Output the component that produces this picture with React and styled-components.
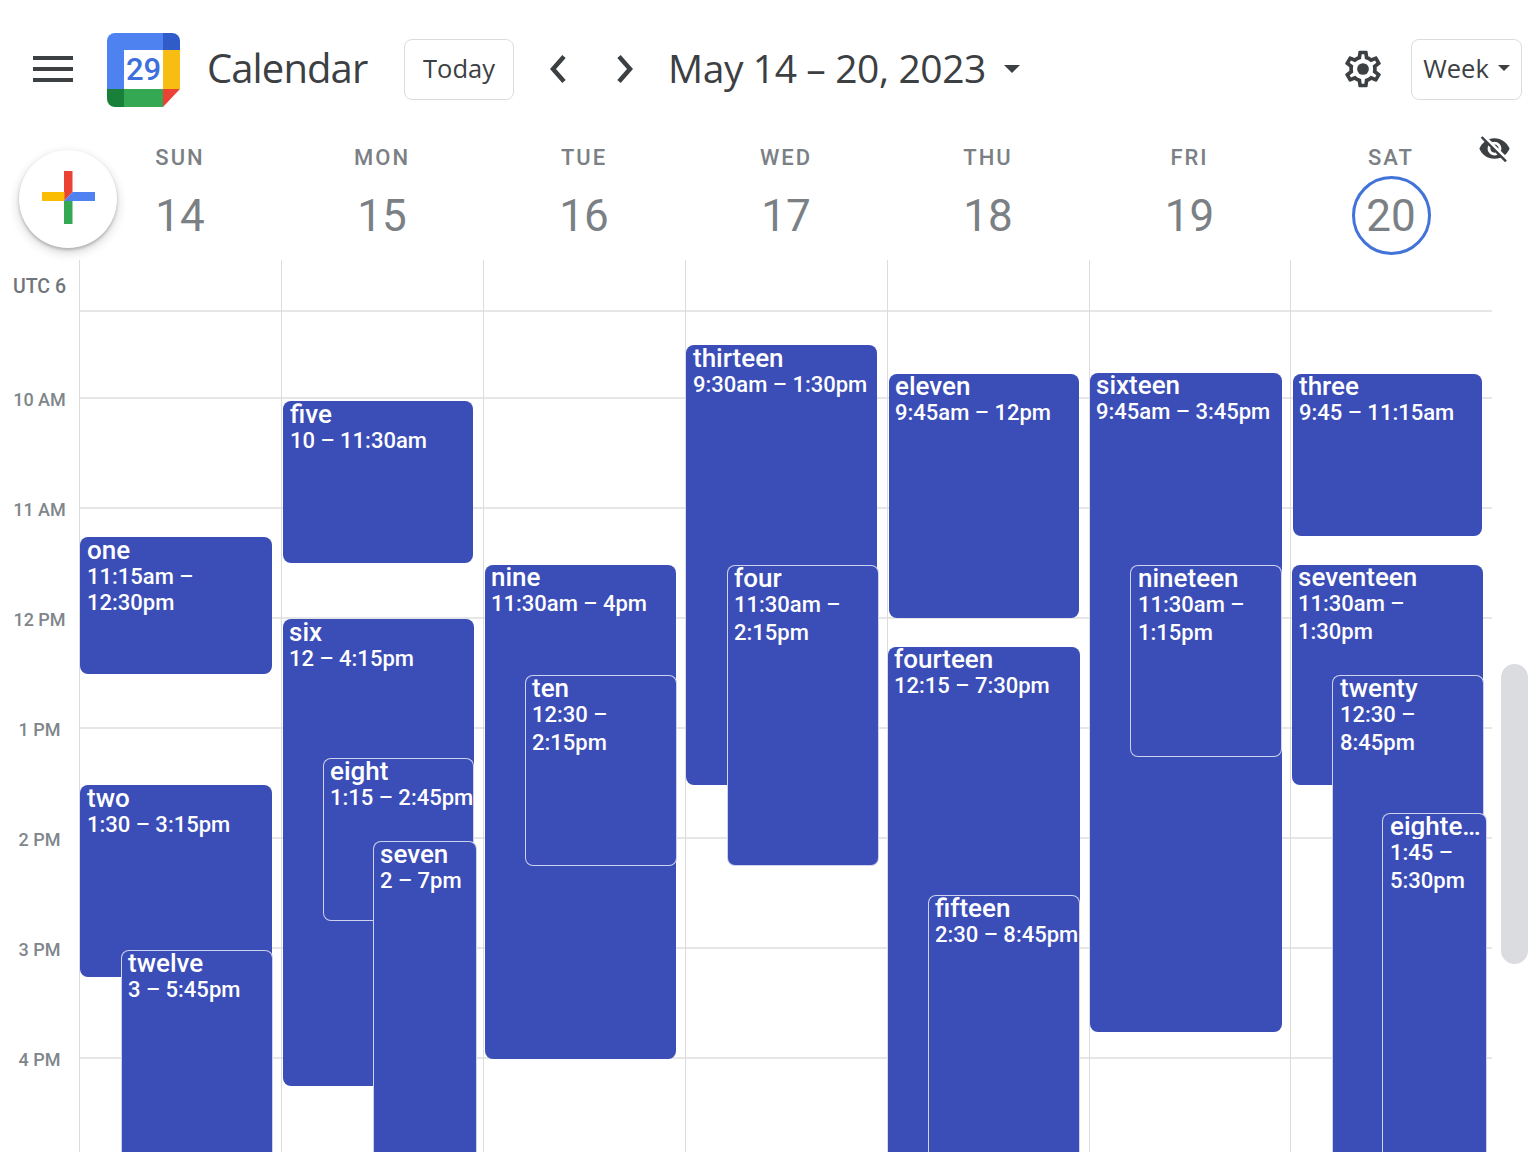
import React from 'react'
import styled, { createGlobalStyle } from 'styled-components'
import { MdVisibilityOff } from 'react-icons/md'

const GlobalStyle = createGlobalStyle`
  html, body {
    margin: 0;
    padding: 0;
    background: #fff;
    font-family: Roboto, "Liberation Sans", sans-serif;
  }
`

const Page = styled.div`
  position: relative;
  width: 1536px;
  height: 1152px;
  overflow: hidden;
  background: #fff;
`

const TopBar = styled.header`
  display: flex;
  align-items: center;
  height: 60px;
  padding: 39px 14px 0 33px;
`

const MenuIcon = styled.svg`
  width: 40px;
  height: 26px;
  margin-right: 34px;
  fill: #3c4043;
`

const Logo = styled.svg`
  width: 73px;
  height: 74px;
  margin: 1px 27px 0 0;
`

const LogoDate = styled.text`
  font-family: Roboto, sans-serif;
  font-size: 31px;
  font-weight: 500;
  fill: #3f6fdc;
`

const AppName = styled.div`
  width: 197px;
  padding-bottom: 4px;
  font-family: "Open Sans", sans-serif;
  font-size: 40px;
  letter-spacing: -0.9px;
  color: #3c4043;
`

const OutlineButton = styled.div`
  display: flex;
  align-items: center;
  justify-content: center;
  box-sizing: border-box;
  width: ${props => props.$width}px;
  height: 61px;
  padding-bottom: 2px;
  border: 1px solid #dadce0;
  border-radius: 8px;
  font-family: "Open Sans", sans-serif;
  font-size: 25.5px;
  color: #3c4043;
`

const Chevron = styled.svg`
  width: 24px;
  height: 34px;
  fill: none;
  stroke: #3c4043;
  stroke-width: 4.5;
  margin-left: ${props => props.$left}px;
`

const DateRange = styled.div`
  margin-left: 31px;
  padding-bottom: 3px;
  font-family: "Open Sans", sans-serif;
  font-size: 39px;
  letter-spacing: -0.4px;
  color: #3c4043;
`

const Caret = styled.span`
  width: 0;
  height: 0;
  margin-left: ${props => props.$left}px;
  border-left: ${props => props.$size}px solid transparent;
  border-right: ${props => props.$size}px solid transparent;
  border-top: ${props => props.$size}px solid #3c4043;
`

const Gear = styled.svg`
  width: 44px;
  height: 44px;
  margin-left: auto;
  margin-right: 26px;
  fill: #3c4043;
`

const Fab = styled.div`
  position: absolute;
  top: 150px;
  left: 19px;
  width: 98px;
  height: 98px;
  border-radius: 50%;
  background: #fff;
  box-shadow: 0 2px 3px rgba(60, 64, 67, 0.3), 0 4px 9px 2px rgba(60, 64, 67, 0.16);
  display: flex;
  align-items: center;
  justify-content: center;
`

const PlusMark = styled.svg`
  width: 53px;
  height: 53px;
  margin-bottom: 3px;
`

const HideIcon = styled(MdVisibilityOff)`
  position: absolute;
  top: 132px;
  left: 1478px;
  width: 33px;
  height: 33px;
  color: #3c4043;
`

const DayHeader = styled.div`
  display: grid;
  grid-template-columns: repeat(5, 202px) 201px 202px;
  height: 161px;
  margin-left: 79px;
`

const DayCell = styled.div`
  display: flex;
  flex-direction: column;
  align-items: center;
  padding-top: 46px;
`

const DayName = styled.div`
  font-size: 22px;
  font-weight: 500;
  line-height: 26px;
  letter-spacing: 2px;
  color: #7b8085;
`

const DayNumber = styled.div`
  box-sizing: border-box;
  display: flex;
  align-items: center;
  justify-content: center;
  width: 79px;
  height: 79px;
  margin-top: 5px;
  border-radius: 50%;
  border: ${props => (props.$today ? '3px solid #4173d8' : 'none')};
  font-size: 44px;
  color: #7b8085;
`

const Grid = styled.div`
  display: flex;
`

const Gutter = styled.div`
  width: 79px;
  flex: none;
`

const GutterLabel = styled.div`
  display: flex;
  align-items: center;
  justify-content: center;
  height: ${props => props.$height}px;
  font-size: ${props => (props.$strong ? 19.5 : 18)}px;
  font-weight: 500;
  color: ${props => (props.$strong ? '#70757a' : '#80868b')};
`

const DayColumn = styled.div`
  position: relative;
  box-sizing: border-box;
  flex: none;
  width: ${props => props.$width}px;
  border-left: 1px solid #dcdcdc;
`

const HourCell = styled.div`
  box-sizing: border-box;
  height: ${props => props.$height}px;
  border-bottom: 2px solid #e6e6e6;
`

const EventCard = styled.div`
  position: absolute;
  box-sizing: border-box;
  top: ${props => props.$top}px;
  left: ${props => props.$left}px;
  width: ${props => props.$width}px;
  height: ${props => props.$height}px;
  padding-left: ${props => props.$inset}px;
  border-radius: 8px;
  border: ${props => (props.$outlined ? '1px solid rgba(255, 255, 255, 0.75)' : 'none')};
  background: #3b4db7;
  color: #fff;
`

const EventTitle = styled.div`
  margin-top: ${props => (props.$flush ? 0 : -1)}px;
  font-size: 26px;
  font-weight: 500;
  line-height: 26px;
  white-space: nowrap;
  ${props => props.$clip && 'overflow: hidden; text-overflow: ellipsis;'}
`

const EventTime = styled.div`
  margin-top: ${props => (props.$tight ? 1 : 0)}px;
  font-size: 22px;
  font-weight: 500;
  line-height: ${props => (props.$tight ? 26 : 28)}px;
  ${props => props.$nowrap && 'white-space: nowrap;'}
`

const Scrollbar = styled.div`
  position: absolute;
  top: 664px;
  left: 1501px;
  width: 27px;
  height: 300px;
  border-radius: 14px;
  background: #dadce0;
`

const days = [
  { name: 'SUN', date: 14, left: 79, width: 202 },
  { name: 'MON', date: 15, left: 281, width: 202 },
  { name: 'TUE', date: 16, left: 483, width: 202 },
  { name: 'WED', date: 17, left: 685, width: 202 },
  { name: 'THU', date: 18, left: 887, width: 202 },
  { name: 'FRI', date: 19, left: 1089, width: 201 },
  { name: 'SAT', date: 20, left: 1290, width: 202, today: true }
]

const gutterRows = [
  ['UTC 6', 52, true],
  ['', 32],
  ['10 AM', 110],
  ['11 AM', 110],
  ['12 PM', 110],
  ['1 PM', 110],
  ['2 PM', 110],
  ['3 PM', 110],
  ['4 PM', 110]
]

const hourRows = [52, 87, 110, 110, 110, 110, 110, 110, 110]

// x1, y1, x2, y2 as they sit on the page, turned into column offsets at render
const events = [
  [
    { title: 'one', time: '11:15am – 12:30pm', box: [80, 537, 272, 674], tight: true, flush: true, inset: 7 },
    { title: 'two', time: '1:30 – 3:15pm', box: [80, 785, 272, 977], flush: true, inset: 7 },
    { title: 'twelve', time: '3 – 5:45pm', box: [121, 950, 273, 1200], outlined: true }
  ],
  [
    { title: 'five', time: '10 – 11:30am', box: [283, 401, 473, 563], flush: true, inset: 7 },
    { title: 'six', time: '12 – 4:15pm', box: [283, 619, 474, 1086], flush: true },
    { title: 'eight', time: '1:15 – 2:45pm', box: [323, 758, 474, 921], outlined: true, nowrap: true },
    { title: 'seven', time: '2 – 7pm', box: [373, 841, 477, 1200], outlined: true }
  ],
  [
    { title: 'nine', time: '11:30am – 4pm', box: [485, 565, 676, 1059] },
    { title: 'ten', time: '12:30 – 2:15pm', box: [525, 675, 677, 866], outlined: true }
  ],
  [
    { title: 'thirteen', time: '9:30am – 1:30pm', box: [686, 345, 877, 785], flush: true, inset: 7 },
    { title: 'four', time: '11:30am – 2:15pm', box: [727, 565, 879, 866], outlined: true }
  ],
  [
    { title: 'eleven', time: '9:45am – 12pm', box: [889, 374, 1079, 618] },
    { title: 'fourteen', time: '12:15 – 7:30pm', box: [888, 647, 1080, 1200] },
    { title: 'fifteen', time: '2:30 – 8:45pm', box: [928, 895, 1080, 1200], outlined: true, nowrap: true }
  ],
  [
    { title: 'sixteen', time: '9:45am – 3:45pm', box: [1090, 373, 1282, 1032] },
    { title: 'nineteen', time: '11:30am – 1:15pm', box: [1130, 565, 1282, 757], outlined: true, inset: 7 }
  ],
  [
    { title: 'three', time: '9:45 – 11:15am', box: [1293, 374, 1482, 536] },
    { title: 'seventeen', time: '11:30am – 1:30pm', box: [1292, 565, 1483, 785] },
    { title: 'twenty', time: '12:30 – 8:45pm', box: [1332, 675, 1484, 1200], outlined: true, inset: 7 },
    { title: 'eighteen', time: '1:45 – 5:30pm', box: [1382, 813, 1487, 1200], outlined: true, inset: 7, clip: true }
  ]
]

const GRID_TOP = 260

const gearPath = 'M19.43 12.98c.04-.32.07-.64.07-.98 0-.34-.03-.66-.07-.98l2.11-1.65c.19-.15.24-.42.12-.64l-2-3.46c-.09-.16-.26-.25-.44-.25-.06 0-.12.01-.17.03l-2.49 1c-.52-.4-1.08-.73-1.69-.98l-.38-2.65C14.46 2.18 14.25 2 14 2h-4c-.25 0-.46.18-.49.42l-.38 2.65c-.61.25-1.17.59-1.69.98l-2.49-1c-.06-.02-.12-.03-.18-.03-.17 0-.34.09-.43.25l-2 3.46c-.13.22-.07.49.12.64l2.11 1.65c-.04.32-.07.65-.07.98 0 .33.03.66.07.98l-2.11 1.65c-.19.15-.24.42-.12.64l2 3.46c.09.16.26.25.44.25.06 0 .12-.01.17-.03l2.49-1c.52.4 1.08.73 1.69.98l.38 2.65c.03.24.24.42.49.42h4c.25 0 .46-.18.49-.42l.38-2.65c.61-.25 1.17-.59 1.69-.98l2.49 1c.06.02.12.03.18.03.17 0 .34-.09.43-.25l2-3.46c.12-.22.07-.49-.12-.64l-2.11-1.65zm-1.98-1.71c.04.31.05.52.05.73 0 .21-.02.43-.05.73l-.14 1.13.89.7 1.08.84-.7 1.21-1.27-.51-1.04-.42-.9.68c-.43.32-.84.56-1.25.73l-1.06.43-.16 1.13-.2 1.35h-1.4l-.19-1.35-.16-1.13-1.06-.43c-.43-.18-.83-.41-1.23-.71l-.91-.7-1.06.43-1.27.51-.7-1.21 1.08-.84.89-.7-.14-1.13c-.03-.31-.05-.54-.05-.74s.02-.43.05-.73l.14-1.13-.89-.7-1.08-.84.7-1.21 1.27.51 1.04.42.9-.68c.43-.32.84-.56 1.25-.73l1.06-.43.16-1.13.2-1.35h1.39l.19 1.35.16 1.13 1.06.43c.43.18.83.41 1.23.71l.91.7 1.06-.43 1.27-.51.7 1.21-1.07.85-.89.7.14 1.13z'

const CalendarLogo = () => (
  <Logo viewBox="0 0 73 74">
    <path d="M17 0h39v17H17z" fill="#4e82f1" />
    <path d="M8 0h9v56H0V8a8 8 0 0 1 8-8z" fill="#4e82f1" />
    <path d="M56 0h9a8 8 0 0 1 8 8v9H56z" fill="#2f5cc9" />
    <path d="M56 17h17v39H56z" fill="#f8bd13" />
    <path d="M17 56h39v18H17z" fill="#34a853" />
    <path d="M0 56h17v18H8a8 8 0 0 1-8-8z" fill="#188038" />
    <path d="M56 56h17L56 74z" fill="#ea4335" />
    <path d="M17 17h39v39H17z" fill="#fff" />
    <LogoDate x="36.500" y="47" textAnchor="middle">29</LogoDate>
  </Logo>
)

const PlusIcon = () => (
  <PlusMark viewBox="0 0 53 53">
    <path d="M22 0h8.500v21L22 30z" fill="#ea4335" />
    <path d="M0 21h22.500v9H0z" fill="#fbbc04" />
    <path d="M22 30h8.500v23H22z" fill="#34a853" />
    <path d="M30.500 21H53v9H22z" fill="#4e82f1" />
  </PlusMark>
)

const App = () => (
  <Page>
    <GlobalStyle />
    <TopBar>
      <MenuIcon viewBox="0 0 40 26">
        <path d="M0 0h40v4H0zM0 11h40v4H0zM0 22h40v4H0z" />
      </MenuIcon>
      <CalendarLogo />
      <AppName>Calendar</AppName>
      <OutlineButton $width={110}>Today</OutlineButton>
      <Chevron $left={32} viewBox="0 0 24 34"><path d="M18 4.500 7 17l11 12.500" /></Chevron>
      <Chevron $left={43} viewBox="0 0 24 34"><path d="M6 4.500 17 17 6 29.500" /></Chevron>
      <DateRange>May 14 – 20, 2023</DateRange>
      <Caret $left={18} $size={8} />
      <Gear viewBox="0 0 24 24">
        <path d={gearPath} />
        <circle cx="12" cy="12" r="3.200" />
      </Gear>
      <OutlineButton $width={111}>
        Week<Caret $left={9} $size={6} />
      </OutlineButton>
    </TopBar>
    <DayHeader>
      {days.map(day => (
        <DayCell key={day.name}>
          <DayName>{day.name}</DayName>
          <DayNumber $today={day.today}>{day.date}</DayNumber>
        </DayCell>
      ))}
    </DayHeader>
    <Grid>
      <Gutter>
        {gutterRows.map(([label, height, strong], i) => (
          <GutterLabel key={i} $height={height} $strong={strong}>{label}</GutterLabel>
        ))}
      </Gutter>
      {days.map((day, col) => (
        <DayColumn key={day.name} $width={day.width}>
          {hourRows.map((height, i) => (
            <HourCell key={i} $height={height} />
          ))}
          {events[col].map(({ title, time, box, outlined, tight, nowrap, flush, clip, inset = 6 }) => (
            <EventCard
              key={title}
              $top={box[1] - GRID_TOP}
              $left={box[0] - day.left - 1}
              $width={box[2] - box[0]}
              $height={box[3] - box[1]}
              $outlined={outlined}
              $inset={inset}
            >
              <EventTitle $flush={flush} $clip={clip}>{title}</EventTitle>
              <EventTime $tight={tight} $nowrap={nowrap}>{time}</EventTime>
            </EventCard>
          ))}
        </DayColumn>
      ))}
    </Grid>
    <Fab><PlusIcon /></Fab>
    <HideIcon />
    <Scrollbar />
  </Page>
)

export default App
